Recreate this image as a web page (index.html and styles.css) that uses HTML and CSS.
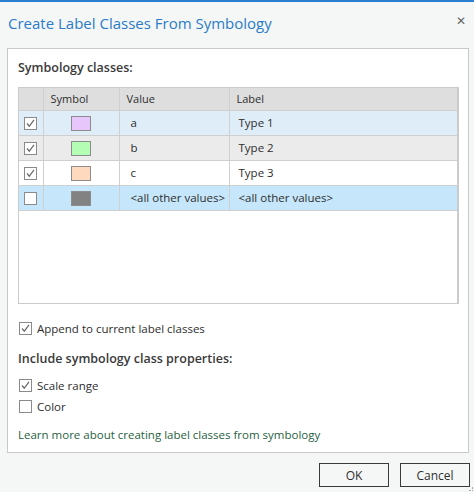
FILE: index.html
```html
<!DOCTYPE html>
<html lang="en">
<head>
<meta charset="UTF-8">
<title>Create Label Classes From Symbology</title>
<link rel="stylesheet" href="styles.css">
</head>
<body>

<div class="dialog">
  <div class="titlebar">
    <h1>Create Label Classes From Symbology</h1>
    <span class="close">&#x2715;</span>
  </div>

  <div class="panel">
    <h2>Symbology classes:</h2>

    <div class="grid">
      <table>
        <thead>
          <tr>
            <th class="col-check"></th>
            <th class="col-symbol">Symbol</th>
            <th class="col-value">Value</th>
            <th>Label</th>
          </tr>
        </thead>
        <tbody>
          <tr class="hover">
            <td class="col-check"><span class="cb on"><svg viewBox="0 0 11 11"><path d="M2 5.5 L4.3 8.2 L9 1.8"/></svg></span></td>
            <td class="col-symbol"><span class="swatch" style="background:#e6c6fb"></span></td>
            <td class="val">a</td>
            <td class="lbl">Type 1</td>
          </tr>
          <tr class="alt">
            <td class="col-check"><span class="cb on"><svg viewBox="0 0 11 11"><path d="M2 5.5 L4.3 8.2 L9 1.8"/></svg></span></td>
            <td class="col-symbol"><span class="swatch" style="background:#b4fdb4"></span></td>
            <td class="val">b</td>
            <td class="lbl">Type 2</td>
          </tr>
          <tr>
            <td class="col-check"><span class="cb on"><svg viewBox="0 0 11 11"><path d="M2 5.5 L4.3 8.2 L9 1.8"/></svg></span></td>
            <td class="col-symbol"><span class="swatch" style="background:#fed9bd"></span></td>
            <td class="val">c</td>
            <td class="lbl">Type 3</td>
          </tr>
          <tr class="selected">
            <td class="col-check"><span class="cb"></span></td>
            <td class="col-symbol"><span class="swatch" style="background:#828282"></span></td>
            <td class="val">&lt;all other values&gt;</td>
            <td class="lbl">&lt;all other values&gt;</td>
          </tr>
        </tbody>
      </table>
    </div>

    <label class="check append"><span class="cb on"><svg viewBox="0 0 11 11"><path d="M2 5.5 L4.3 8.2 L9 1.8"/></svg></span>Append to current label classes</label>

    <h2 class="props">Include symbology class properties:</h2>

    <label class="check"><span class="cb on"><svg viewBox="0 0 11 11"><path d="M2 5.5 L4.3 8.2 L9 1.8"/></svg></span>Scale range</label>
    <label class="check"><span class="cb"></span>Color</label>

    <a class="learn" href="#">Learn more about creating label classes from symbology</a>
  </div>

  <div class="buttons">
    <button>OK</button>
    <button>Cancel</button>
  </div>
  <span class="grip"></span>
</div>

</body>
</html>
```

FILE: styles.css
```css
html, body {
  margin: 0;
  padding: 0;
}
body {
  font-family: "Open Sans", "Noto Sans", sans-serif;
  font-size: 11.5px;
  color: #2e2e2e;
  background-color: #f5f7f7;
}
.dialog {
  position: relative;
  width: 474px;
  height: 492px;
  border-top: 2px solid #2b7fd0;
  box-sizing: border-box;
}
.titlebar {
  display: flex;
  justify-content: space-between;
  align-items: center;
  height: 46px;
  padding: 0 8px 5px 8px;
  box-sizing: border-box;
}
h1 {
  margin: 0;
  font-size: 15px;
  font-weight: normal;
  color: #2a7cc8;
}
.close {
  font-size: 12px;
  color: #666;
  margin-top: -4px;
}
.panel {
  margin: 0 5px 0 7px;
  height: 405px;
  box-sizing: border-box;
  border: 1px solid #c9c9c9;
  background-color: #fff;
  padding: 10px 9px 0 10px;
}
h2 {
  margin: 0 0 10px 0;
  font-size: 12.5px;
  font-weight: 600;
  color: #3a3a3a;
  line-height: 18px;
}
.grid {
  height: 217px;
  box-sizing: border-box;
  border: 1px solid #cbcbcb;
  border-right-width: 2px;
}
table {
  width: 100%;
  border-collapse: collapse;
  table-layout: fixed;
}
th, td {
  box-sizing: border-box;
  padding: 0;
  text-align: left;
  border-right: 1px solid #cfcfcf;
  border-bottom: 1px solid #cfcfcf;
  white-space: nowrap;
}
th:last-child, td:last-child {
  border-right: none;
}
th {
  height: 22px;
  font-weight: normal;
  font-size: 11px;
  background-color: #dedede;
  padding-left: 7px;
}
td {
  height: 25px;
}
.col-check {
  width: 24px;
  text-align: center;
}
th.col-check {
  padding: 0;
}
.col-symbol {
  width: 76px;
  text-align: center;
}
th.col-symbol {
  text-align: left;
}
.col-value {
  width: 110px;
}
td.val {
  padding-left: 11px;
}
td.lbl {
  padding-left: 9px;
}
tr.hover td {
  background-color: #deedf8;
}
tr.alt td {
  background-color: #ebebeb;
}
tr.selected td {
  background-color: #c6e7fb;
}
.swatch {
  display: inline-block;
  width: 18px;
  height: 13px;
  border: 1px solid #8c8c8c;
  vertical-align: middle;
}
.cb {
  display: inline-block;
  width: 11px;
  height: 11px;
  border: 1px solid #8a8a8a;
  background-color: #fff;
  vertical-align: middle;
  flex: none;
}
.cb svg {
  display: block;
  width: 11px;
  height: 11px;
  fill: none;
  stroke: #6a6a6a;
  stroke-width: 1.2;
}
.check {
  display: flex;
  align-items: center;
  gap: 5px;
  height: 21px;
  padding-left: 1px;
}
.append {
  margin-top: 14px;
}
h2.props {
  margin: 11px 0 7px 0;
}
.learn {
  display: block;
  margin-top: 10px;
  color: #1f5f3f;
  text-decoration: none;
}
.buttons {
  display: flex;
  justify-content: flex-end;
  gap: 11px;
  padding: 10px 4px 0 0;
}
button {
  width: 70px;
  height: 24px;
  font-family: inherit;
  font-size: 12px;
  color: #2e2e2e;
  background-color: #f5f7f7;
  border: 1px solid #3a3a3a;
  padding: 0;
}
.grip {
  position: absolute;
  right: 1px;
  bottom: 1px;
  width: 3px;
  height: 3px;
  border-right: 1px dotted #aaa;
  border-bottom: 1px dotted #aaa;
}
```
